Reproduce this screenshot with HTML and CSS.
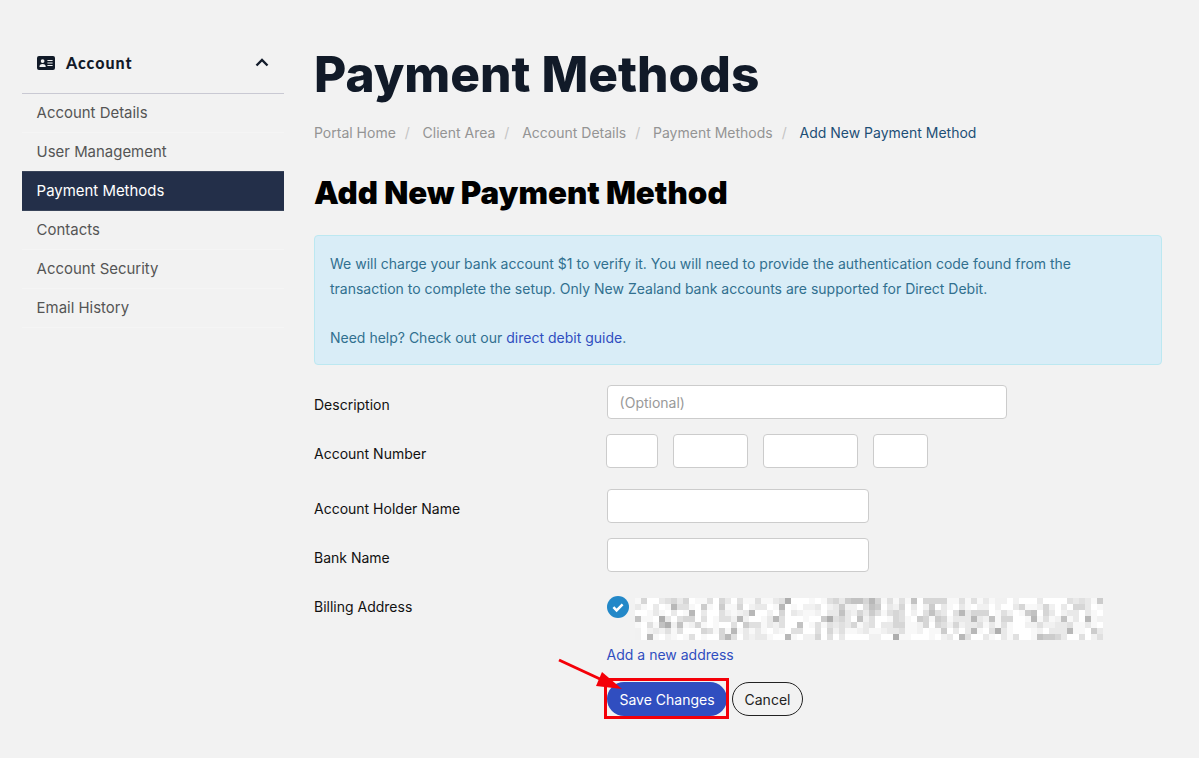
FILE: index.html
```html
<!DOCTYPE html>
<html>
	<head>
		<meta charset="UTF-8">
		<title>Payment Methods</title>
		<link rel="stylesheet" href="styles.css">
	</head>
	<body>
		<div class="page">
			<div class="sidebar">
				<div class="side-head">
					<svg class="card-icon" viewBox="0 0 18 14"><path fill-rule="evenodd" d="M2 0h14a2 2 0 0 1 2 2v10a2 2 0 0 1-2 2H2a2 2 0 0 1-2-2V2a2 2 0 0 1 2-2zM5.6 3.2a1.9 1.9 0 1 0 0 3.8 1.9 1.9 0 0 0 0-3.8zM2.4 10.6c0 .3.2.5.5.5h5.4c.3 0 .5-.2.5-.5 0-1.3-1-2.6-3.2-2.6s-3.2 1.3-3.2 2.6zM10.4 4v1.1h5.2V4zM10.4 6.5v1.1h5.2V6.5zM10.4 9v1.1h5.2V9z"/></svg>
					<span class="side-title">Account</span>
					<svg class="chevron" viewBox="0 0 14 9"><path d="M1.5 7.5 7 2l5.5 5.5" fill="none" stroke="#131c2b" stroke-width="2.4"/></svg>
				</div>
				<a class="side-item" href="#">Account Details</a>
				<a class="side-item" href="#">User Management</a>
				<a class="side-item active" href="#">Payment Methods</a>
				<a class="side-item" href="#">Contacts</a>
				<a class="side-item" href="#">Account Security</a>
				<a class="side-item" href="#">Email History</a>
			</div>
			<div class="main">
				<h1>Payment Methods</h1>
				<div class="crumbs">
					<a href="#">Portal Home</a><i>/</i>
					<a href="#">Client Area</a><i>/</i>
					<a href="#">Account Details</a><i>/</i>
					<a href="#">Payment Methods</a><i>/</i>
					<span>Add New Payment Method</span>
				</div>
				<h2>Add New Payment Method</h2>
				<div class="alert">
					We will charge your bank account $1 to verify it. You will need to provide the authentication code found from the transaction to complete the setup. Only New Zealand bank accounts are supported for Direct Debit.<br><br>
					Need help? Check out our <a href="#">direct debit guide</a>.
				</div>
				<form class="form">
					<div class="row row-desc">
						<label>Description</label>
						<input class="w400" type="text" placeholder="(Optional)">
					</div>
					<div class="row row-acct">
						<label>Account Number</label>
						<div class="acct">
							<input class="w52" type="text">
							<input class="w75" type="text">
							<input class="w95" type="text">
							<input class="w55" type="text">
						</div>
					</div>
					<div class="row row-holder">
						<label>Account Holder Name</label>
						<input class="w262" type="text">
					</div>
					<div class="row row-bank">
						<label>Bank Name</label>
						<input class="w262" type="text">
					</div>
					<div class="row row-addr">
						<label>Billing Address</label>
						<div class="addr">
							<svg class="check" viewBox="0 0 22 22"><circle cx="11" cy="11" r="11" fill="#2388c8"/><path d="m6.4 11.2 3.2 3.2 6-6" fill="none" stroke="#fff" stroke-width="2.5"/></svg>
							<canvas id="mosaic" width="468" height="42"></canvas>
						</div>
					</div>
					<a class="new-addr" href="#">Add a new address</a>
					<div class="actions">
						<button class="btn save" type="button">Save Changes</button>
						<button class="btn cancel" type="button">Cancel</button>
						<div class="mark"></div>
						<svg class="arrow" viewBox="0 0 70 40"><path d="M1 2 42 21" stroke="#f40008" stroke-width="3" fill="none"/><path d="M64 31 38 28 44 14z" fill="#f40008"/></svg>
					</div>
				</form>
			</div>
		</div>
		<script src="mosaic.js"></script>
	</body>
</html>
```

FILE: styles.css
```css
*{
	box-sizing: border-box;
}
body{
	margin: 0;
	background-color: #f2f2f2;
	font: 14px/24px Inter, "Liberation Sans", sans-serif;
	color: #111a28;
}
a {
	text-decoration: none;
}
.page{
	display: flex;
	gap: 30px;
	padding: 0 37px 0 22px;
}
.sidebar{
	width: 262px;
	flex: none;
	padding-top: 33px;
}
.side-head{
	display: flex;
	align-items: center;
	height: 61px;
	padding: 0 15px 1px 15px;
	border-bottom: 1px solid #c9c9d3;
}
.card-icon{
	width: 18px;
	height: 14px;
	fill: #111a28;
	margin-right: 11px;
}
.side-title{
	flex: 1;
	font: 900 16px/24px Lato, sans-serif;
	letter-spacing: 1px;
}
.chevron{
	width: 14px;
	height: 9px;
}
.side-item{
	display: block;
	height: 39px;
	padding: 0 14.6px;
	line-height: 39px;
	font-size: 14.95px;
	color: #555;
	border-bottom: 1px solid #f5f5f5;
}
.side-item.active{
	margin-top: -1px;
	height: 40px;
	line-height: 38px;
	color: #fff;
	background-color: #232f49;
	border-top: 1px solid #39445a;
	border-bottom: 1px solid #39445a;
}
.main{
	flex: 1;
	padding-top: 40px;
}
h1{
	margin: 0;
	font-size: 49.6px;
	line-height: 68px;
	font-weight: 800;
	color: #111a28;
}
.crumbs{
	margin-top: 13px;
	line-height: 24px;
}
.crumbs a{
	color: #949494;
}
.crumbs i{
	font-style: normal;
	color: #c4c4c4;
	margin: 0 8.9px;
}
.crumbs span{
	color: #1d4f76;
}
h2{
	margin: 26px 0 0;
	font-size: 31.3px;
	line-height: 44px;
	font-weight: 900;
	color: #000;
}
.alert{
	margin-top: 20px;
	height: 130px;
	padding: 16px 15px;
	line-height: 24.5px;
	color: #31708f;
	background-color: #d9edf7;
	border: 1px solid #bce8f1;
	border-radius: 4px;
}
.alert a{
	color: #304ec0;
}
.row{
	display: flex;
}
.row label{
	width: 293px;
	flex: none;
	color: #111;
}
input{
	height: 34px;
	padding: 0 11.6px;
	font: 14px Inter, sans-serif;
	background-color: #fff;
	border: 1px solid #ccc;
	border-radius: 4px;
}
input::placeholder{
	color: #999;
}
.w400{
	width: 400px;
}
.w262{
	width: 262px;
}
.w52{
	width: 52px;
}
.w75{
	width: 75px;
}
.w95{
	width: 95px;
}
.w55{
	width: 55px;
}
.row-desc{
	margin-top: 20px;
}
.row-desc label,.row-holder label,.row-bank label,.row-acct label{
	padding-top: 8px;
}
.row-acct{
	margin-top: 15px;
}
.acct{
	display: flex;
	gap: 15px;
	margin-left: -1px;
}
.row-holder{
	margin-top: 21px;
}
.row-bank{
	margin-top: 15px;
}
.row-addr{
	margin-top: 23px;
}
.addr{
	display: flex;
	align-items: flex-start;
	gap: 6px;
	height: 45px;
}
.check{
	width: 22px;
	height: 22px;
	margin-top: 1px;
}
#mosaic{
	margin-top: 3px;
}
.new-addr{
	display: block;
	margin: 3px 0 0 292.6px;
	color: #304ec0;
}
.actions{
	position: relative;
	display: flex;
	gap: 5px;
	margin: 15px 0 0 293px;
	padding-bottom: 38px;
}
.btn{
	height: 34px;
	padding: 0;
	font: 14px Inter, sans-serif;
	white-space: nowrap;
	border-radius: 17px;
}
.save{
	width: 120px;
	color: #fff;
	background-color: #304ec0;
	border: none;
}
.cancel{
	width: 71px;
	color: #222;
	background-color: transparent;
	border: 1px solid #222;
}
.mark{
	position: absolute;
	left: -3px;
	top: -4px;
	width: 125px;
	height: 41px;
	border: 3px solid #f40008;
}
.arrow{
	position: absolute;
	left: -49px;
	top: -24px;
	width: 70px;
	height: 40px;
}
```

FILE: mosaic.js
```js
//模糊地址的马赛克，每格6px，数字越大颜色越深
(function(){
	var rows = [
		"1500345350114053041" + "14113490001014536775" + "85141417055551141413" + "1220200030000434316 0",
		"3103018441061061150" + "23301801022302362204" + "76032503026031031022" + "0200351125203055301",
		"0013103018030042123" + "80020503211203373253" + "64145402047430483555" + "0142016705302330310",
		"7110930455040144282" + "00138400010069453072" + "40015410651651333832" + "7155001814127130812",
		"1041792712510100406" + "44132400701414343513" + "40335511250542523341" + "3141002242233411310",
		"2023241400054151813" + "13102104400405241123" + "11233411201160303810" + "4931000120333811063",
		"2081021014010058403" + "23310081022504030000" + "22009110001023084003" + "1031400176653004024"
	];
	var levels = ["#ffffff", "#f8f8f8", "#f1f1f1", "#e9e9e9", "#e0e0e0", "#d6d6d6", "#cccccc", "#c2c2c2", "#b8b8b8", "#aeaeae"];
	var ctx = document.getElementById("mosaic").getContext("2d");
	for (var y = 0; y < rows.length; y++){
		var row = rows[y].replace(/ /g, "");
		for (var x = 0; x < row.length; x++){
			ctx.fillStyle = levels[+row.charAt(x)];
			ctx.fillRect(x * 6, y * 6, 6, 6);
		}
	}
}())
```
